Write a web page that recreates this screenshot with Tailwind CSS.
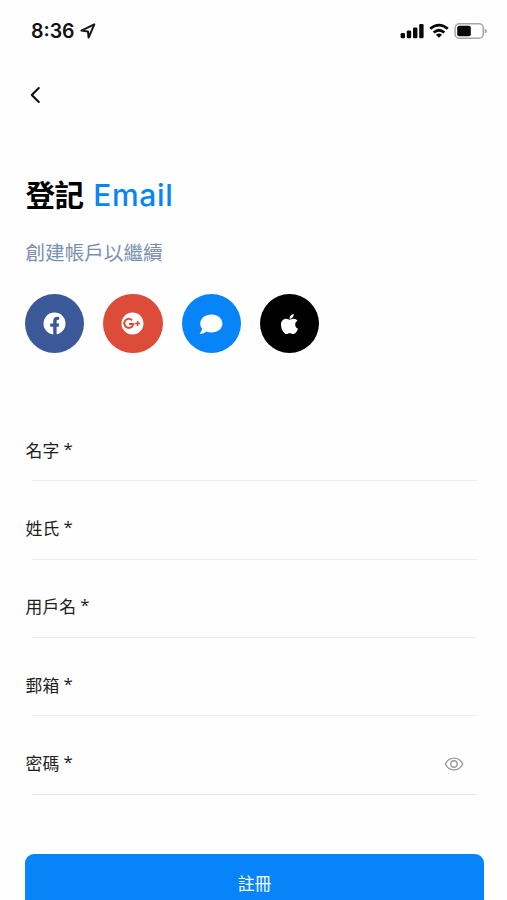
<!DOCTYPE html>
<html lang="zh-Hant">
<head>
<meta charset="utf-8">
<title>登記 Email</title>
<script src="https://cdn.jsdelivr.net/npm/@tailwindcss/browser@4"></script>
</head>
<body class="bg-[#fefefe] overflow-hidden font-['Inter','Noto_Sans_CJK_TC',sans-serif]">
<div class="w-[507px] h-[900px] overflow-hidden flex flex-col">
  <header class="h-[62px] shrink-0 flex items-center justify-between pl-[31px] pr-[19px]">
    <div class="flex items-center gap-[6px]">
      <span class="text-[19.5px] leading-none font-semibold text-[#111] w-[43px] whitespace-nowrap pt-[2px]">8:36</span>
      <svg class="w-[16px] h-[16px]" viewBox="0 0 16 16" fill="none" stroke="#151515" stroke-width="2" stroke-linejoin="round"><path d="M14.3 1.3L1.4 7.6L8 8.4L8.6 14.6Z"/></svg>
    </div>
    <div class="flex items-center">
      <svg class="w-[24px] h-[16px]" viewBox="0 0 24 16" fill="#080808"><rect x="0.6" y="10" width="4.4" height="5.2" rx="1.3"/><rect x="6.8" y="7.4" width="4.4" height="7.8" rx="1.3"/><rect x="13" y="4.4" width="4.4" height="10.8" rx="1.3"/><rect x="19.2" y="1" width="4.4" height="14.2" rx="1.3"/></svg>
      <svg class="w-[20px] h-[16px] ml-[5px]" viewBox="0 0 20 16" fill="none" stroke="#080808" stroke-width="2.7"><path d="M1.2 5.8Q10 -1.7 18.8 5.8"/><path d="M4.7 9.5Q10 5 15.3 9.5"/><path d="M10 14.7L6.9 11.7Q10 9.3 13.1 11.7Z" fill="#080808" stroke="none"/></svg>
      <svg class="w-[34px] h-[18px] ml-[5px]" viewBox="0 0 34 18"><rect x="1.1" y="1.8" width="28.2" height="14.4" rx="4.3" fill="none" stroke="#a5a5a5" stroke-width="1.5"/><rect x="3.2" y="3.8" width="13.6" height="10.4" rx="2" fill="#050505"/><path d="M30.7 6.5Q33 7 33 9T30.7 11.5Z" fill="#aaa"/></svg>
    </div>
  </header>

  <nav class="h-[66px] shrink-0 pl-[30px] flex items-center">
    <svg class="w-[11px] h-[18px]" viewBox="0 0 11 18" fill="none" stroke="#111" stroke-width="2.1" stroke-linecap="round" stroke-linejoin="round"><path d="M8.8 2L1.8 9L8.8 16"/></svg>
  </nav>

  <main class="pl-[25px] pr-[23px] pt-[47px]">
    <h1 class="h-[40px] flex items-center gap-[9.5px] leading-[40px] whitespace-nowrap pl-[0.5px]">
      <span class="text-[29.5px] font-bold text-black tracking-[-0.4px]">登記</span>
      <span class="text-[30px] font-medium text-[#0785f8] tracking-[0.7px]">Email</span>
    </h1>
    <p class="mt-[23px] h-[30px] leading-[30px] text-[19.6px] font-normal text-[#7b90b0] pl-[0.5px]">創建帳戶以繼續</p>

    <div class="mt-[26px] flex gap-[19.2px]">
      <div class="size-[59.2px] rounded-full bg-[#3b5998] flex items-center justify-center">
        <svg class="size-[23px]" viewBox="0 0 23 23"><circle cx="11.5" cy="11.5" r="11" fill="#fff"/><path d="M10.2 23V14.8H7.2V11.5H10.2V9.1C10.2 6.2 11.8 4.8 14.2 4.8L16.2 5V7.8H15.2C13.9 7.8 13.6 8.5 13.6 9.5V11.5H16.2L15.7 14.8H13.6V23Z" fill="#3b5998"/></svg>
      </div>
      <div class="size-[59.2px] rounded-full bg-[#dd4b39] flex items-center justify-center">
        <svg class="size-[23px]" viewBox="0 0 23 23"><circle cx="11.5" cy="11.5" r="11" fill="#fff"/><g fill="none" stroke="#dd4b39" stroke-width="2"><path d="M11.1 8.3A4.5 4.5 0 1 0 12.2 12.1H8"/><path d="M16.6 9V14M14.1 11.5H19.1" stroke-width="1.6"/></g></svg>
      </div>
      <div class="size-[59.2px] rounded-full bg-[#0785f8] flex items-center justify-center">
        <svg class="w-[24px] h-[22px]" viewBox="0 0 24 22" fill="#fff"><path d="M12.4 1.5C18.6 1.5 23.4 5.4 23.4 10.6S18.6 19.6 12.4 19.6C10.5 19.6 8.8 19.2 7.2 18.5C5.7 20 3.8 20.8 1.2 20.9C0.7 20.9 0.6 20.4 1 20C2.2 18.8 3 17.3 3.1 15.8C1.8 14.3 1.2 12.5 1.2 10.6C1.2 5.4 6.2 1.5 12.4 1.5Z"/></svg>
      </div>
      <div class="size-[59.2px] rounded-full bg-black flex items-center justify-center">
        <svg class="w-[17px] h-[20px]" viewBox="4 32 376 448" preserveAspectRatio="none" fill="#fff"><path d="M318.7 268.7c-.2-36.7 16.4-64.4 50-84.8-18.8-26.9-47.2-41.7-84.7-44.6-35.5-2.8-74.3 20.7-88.5 20.7-15 0-49.4-19.7-76.4-19.7C63.3 141.2 4 184.8 4 273.5q0 39.3 14.4 81.2c12.8 36.7 59 126.7 107.2 125.2 25.2-.6 43-17.9 75.8-17.9 31.8 0 48.3 17.9 76.4 17.9 48.6-.7 90.4-82.5 102.6-119.3-65.2-30.7-61.7-90-61.7-91.9zm-56.6-164.2c27.3-32.4 24.8-61.9 24-72.5-24.1 1.4-52 16.4-67.9 34.9-17.5 19.8-27.8 44.3-25.6 71.9 26.1 2 49.9-11.4 69.5-34.3z"/></svg>
      </div>
    </div>

    <form class="mt-[71.3px] text-[16.8px] text-[#202020] leading-[26px] font-['Open_Sans','Noto_Sans_CJK_TC',sans-serif]">
      <div class="h-[78.3px] pt-[13.2px] pl-[0.6px]"><label class="block h-[42.8px]">名字 <span class="align-[2px] leading-none">*</span></label><div class="ml-[6.4px] mr-[7.5px] h-px bg-[#ebebeb]"></div></div>
      <div class="h-[78.3px] pt-[13.2px] pl-[0.6px]"><label class="block h-[42.8px]">姓氏 <span class="align-[2px] leading-none">*</span></label><div class="ml-[6.4px] mr-[7.5px] h-px bg-[#ebebeb]"></div></div>
      <div class="h-[78.3px] pt-[13.2px] pl-[0.6px]"><label class="block h-[42.8px]">用戶名 <span class="align-[2px] leading-none">*</span></label><div class="ml-[6.4px] mr-[7.5px] h-px bg-[#ebebeb]"></div></div>
      <div class="h-[78.3px] pt-[13.2px] pl-[0.6px]"><label class="block h-[42.8px]">郵箱 <span class="align-[2px] leading-none">*</span></label><div class="ml-[6.4px] mr-[7.5px] h-px bg-[#ebebeb]"></div></div>
      <div class="h-[78.3px] pt-[13.2px] pl-[0.6px]">
        <div class="h-[42.8px] flex justify-between pr-[20px]"><label>密碼 <span class="align-[2px] leading-none">*</span></label>
          <svg class="w-[20px] h-[14px] mt-[6.5px]" viewBox="0 0 20 14" fill="none" stroke="#9a9a9a" stroke-width="1.4"><path d="M1.3 7C5.2-.9 14.8-.9 18.7 7C14.8 14.9 5.2 14.9 1.3 7Z"/><circle cx="10" cy="7" r="3.2"/></svg>
        </div>
        <div class="ml-[6.4px] mr-[7.5px] h-px bg-[#e8e8e8]"></div>
      </div>
      <button type="button" class="mt-[38px] block w-[459px] h-[61px] rounded-[9px] bg-[#0785f8] text-white text-[16.8px] text-center">註冊</button>
    </form>
  </main>
</div>
</body>
</html>
